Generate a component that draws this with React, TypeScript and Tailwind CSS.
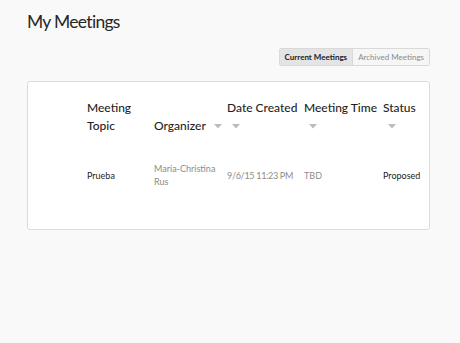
import React from 'react';

function Caret({ inline }: { inline?: boolean }) {
  return (
    <svg
      width="8"
      height="5"
      viewBox="0 0 8 5"
      className={inline ? 'ml-[8px] shrink-0' : 'ml-[5px] block'}
    >
      <path d="M0 0h8L4 4.5z" fill="#bcbcbc" />
    </svg>
  );
}

function HeadCol({ top, bottom }: { top: React.ReactNode; bottom: React.ReactNode }) {
  return (
    <div className="flex flex-col">
      <div className="flex h-[18px] items-center whitespace-nowrap">{top}</div>
      <div className="flex h-[18px] items-center whitespace-nowrap">{bottom}</div>
    </div>
  );
}

export default function App() {
  return (
    <div
      className="min-h-[343px] bg-[#f9f9f9] pl-[27px] pr-[30px] pt-[10px] text-[#222]"
      style={{ fontFamily: 'Lato, "Open Sans", sans-serif' }}
    >
      <h1 className="text-[17.5px] leading-[24px] tracking-[-0.7px] text-[#262626]">My Meetings</h1>

      <div className="mt-[14px] flex justify-end">
        <div className="flex h-[18px] rounded-[2px] border border-[#d9d9d9] text-[8px] leading-[16px]">
          <button className="bg-[#e4e4e4] px-[5px] font-bold text-[#222]">Current Meetings</button>
          <button className="border-l border-[#d9d9d9] bg-[#f6f6f6] px-[5px] text-[#8a8a8a]">
            Archived Meetings
          </button>
        </div>
      </div>

      <div className="mt-[15px] h-[149px] rounded-[3px] border border-[#dcdcdc] bg-white pl-[59px] pt-[17px]">
        <div className="grid grid-cols-[67px_73px_77px_79px_46px] text-[12px] font-medium leading-[18px] text-[#1f1f1f]">
          <HeadCol top="Meeting" bottom="Topic" />
          <HeadCol
            top={null}
            bottom={
              <>
                Organizer
                <Caret inline />
              </>
            }
          />
          <HeadCol top="Date Created" bottom={<Caret />} />
          <HeadCol top="Meeting Time" bottom={<Caret />} />
          <HeadCol top="Status" bottom={<Caret />} />
        </div>

        <div className="mt-[27px] grid grid-cols-[67px_73px_77px_79px_46px] items-center text-[9px] leading-[13px]">
          <div className="text-[#222]">Prueba</div>
          <div className="text-[#8c8c8c]">
            Maria-Christina
            <br />
            Rus
          </div>
          <div className="whitespace-nowrap tracking-[-0.3px] text-[#8c8c8c]">9/6/15 11:23 PM</div>
          <div className="text-[#8c8c8c]">TBD</div>
          <div className="text-[#222]">Proposed</div>
        </div>
      </div>
    </div>
  );
}
